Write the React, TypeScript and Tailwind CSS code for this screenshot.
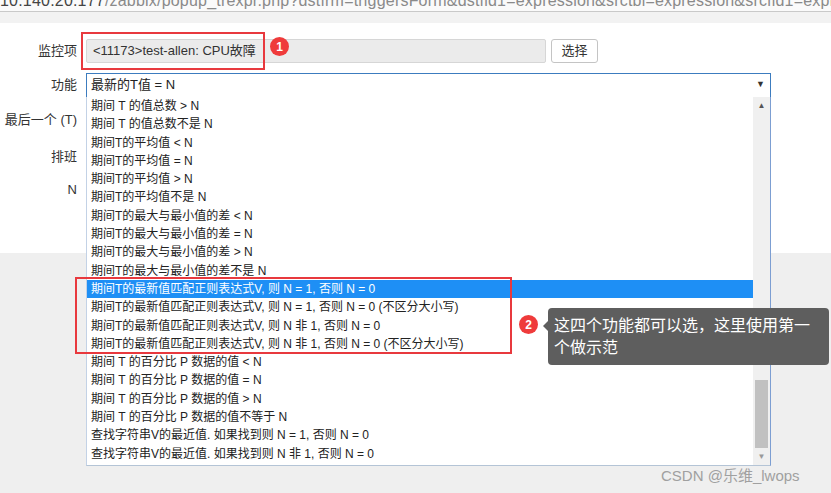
import React from "react";

const items: string[] = [
  "期间 T 的值总数 > N",
  "期间 T 的值总数不是 N",
  "期间T的平均值 < N",
  "期间T的平均值 = N",
  "期间T的平均值 > N",
  "期间T的平均值不是 N",
  "期间T的最大与最小值的差 < N",
  "期间T的最大与最小值的差 = N",
  "期间T的最大与最小值的差 > N",
  "期间T的最大与最小值的差不是 N",
  "期间T的最新值匹配正则表达式V, 则 N = 1, 否则 N = 0",
  "期间T的最新值匹配正则表达式V, 则 N = 1, 否则 N = 0 (不区分大小写)",
  "期间T的最新值匹配正则表达式V, 则 N 非 1, 否则 N = 0",
  "期间T的最新值匹配正则表达式V, 则 N 非 1, 否则 N = 0 (不区分大小写)",
  "期间 T 的百分比 P 数据的值 < N",
  "期间 T 的百分比 P 数据的值 = N",
  "期间 T 的百分比 P 数据的值 > N",
  "期间 T 的百分比 P 数据的值不等于 N",
  "查找字符串V的最近值. 如果找到则 N = 1, 否则 N = 0",
  "查找字符串V的最近值. 如果找到则 N 非 1, 否则 N = 0",
];

const Badge = ({ n, className }: { n: string; className: string }) => (
  <div
    className={`absolute w-[19px] h-[19px] rounded-full bg-[#ef3b3b] text-white text-[12px] font-bold flex items-center justify-center ${className}`}
  >
    {n}
  </div>
);

const Label = ({ text }: { text: string }) => (
  <div className="w-[77px] text-right text-[13px] text-[#333] shrink-0">{text}</div>
);

export default function App() {
  return (
    <div className="relative w-[831px] h-[493px] overflow-hidden bg-[#efefef] font-['Liberation_Sans','Noto_Sans_CJK_SC',sans-serif]">
      {/* address bar, cut at top */}
      <div className="h-[12px] overflow-hidden bg-[#fafafa] border-b border-[#c9c9c9]">
        <div className="-mt-[9px] whitespace-nowrap text-[16px] leading-[20px] tracking-[0.2px]">
          <span className="text-[#444]">10.140.20.177</span>
          <span className="text-[#8a8a8a]">
            /zabbix/popup_trexpr.php?dstfrm=triggersForm&amp;dstfld1=expression&amp;srctbl=expression&amp;srcfld1=expression&amp;context
          </span>
        </div>
      </div>
      <div className="h-[11px] bg-[#f2f2f2]" />

      {/* form */}
      <div className="h-[230px] bg-white pt-[16px]">
        <div className="flex items-center h-[24px] gap-[9px]">
          <Label text="监控项" />
          <div className="w-[460px] h-[24px] bg-[#ebebeb] border border-[#d6d6d6] rounded-[2px] text-[13px] text-[#333] px-[6px] flex items-center">
            &lt;11173&gt;test-allen: CPU故障
          </div>
          <button className="ml-[-4px] w-[47px] h-[24px] bg-white border border-[#c4c4c4] rounded-[3px] text-[13px] text-[#333]">
            选择
          </button>
        </div>
        <div className="flex items-center h-[24px] gap-[9px] mt-[10px]">
          <Label text="功能" />
          <div className="w-[685px] h-[25px] border border-[#3c7cbf] flex items-center justify-between px-[4px] text-[13px] text-[#222]">
            <span>最新的T值 = N</span>
            <span className="text-[9px] text-[#333] pr-[1px]">▼</span>
          </div>
        </div>
        <div className="flex items-center h-[24px] mt-[11px]">
          <Label text="最后一个 (T)" />
        </div>
        <div className="flex items-center h-[24px] mt-[13px]">
          <Label text="排班" />
        </div>
        <div className="flex items-center h-[24px] mt-[9px]">
          <Label text="N" />
        </div>
      </div>

      {/* open dropdown list */}
      <div className="absolute left-[86px] top-[97px] w-[685px] h-[369px] bg-white border-l border-l-[#c3d2e6] border-r border-r-[#7c9ed2] border-b border-b-[#b4c4d6] flex">
        <div className="flex-1 flex flex-col">
          {items.map((t, i) => (
            <div
              key={i}
              className={`h-[18.3px] leading-[18.3px] pl-[4px] text-[12px] whitespace-nowrap ${
                i === 10 ? "bg-[#1e8ff5] text-white" : "text-[#222]"
              }`}
            >
              {t}
            </div>
          ))}
        </div>
        <div className="w-[17px] bg-[#f0f0f0] flex flex-col items-center">
          <div className="h-[18px] flex items-center justify-center text-[8px] text-[#555]">▲</div>
          <div className="flex-1" />
          <div className="w-[13px] h-[68px] bg-[#c1c1c1]" />
          <div className="h-[17px] flex items-center justify-center text-[8px] text-[#999]">▼</div>
        </div>
      </div>

      {/* annotations */}
      <div className="absolute left-[81px] top-[32px] w-[184px] h-[38px] border-2 border-[#e8393e]" />
      <Badge n="1" className="left-[270px] top-[37px]" />
      <div className="absolute left-[75px] top-[277px] w-[437px] h-[77px] border-2 border-[#e8393e]" />
      <Badge n="2" className="left-[519px] top-[315px]" />
      <div className="absolute left-[548px] top-[308px] w-[281px] h-[57px] rounded-[4px] bg-[#5e5e5e] text-white text-[16px] leading-[22px] px-[6px] pt-[5px] font-['Noto_Sans_CJK_SC',sans-serif]">
        <div className="absolute -left-[5px] top-[13px] w-0 h-0 border-y-[5px] border-y-transparent border-r-[5px] border-r-[#5e5e5e]" />
        这四个功能都可以选，这里使用第一个做示范
      </div>

      <div className="absolute left-[661px] top-[465px] text-[15px] text-[#a0a0a0] font-['Liberation_Sans','Noto_Sans_CJK_SC',sans-serif]">
        CSDN @乐维_lwops
      </div>
    </div>
  );
}
